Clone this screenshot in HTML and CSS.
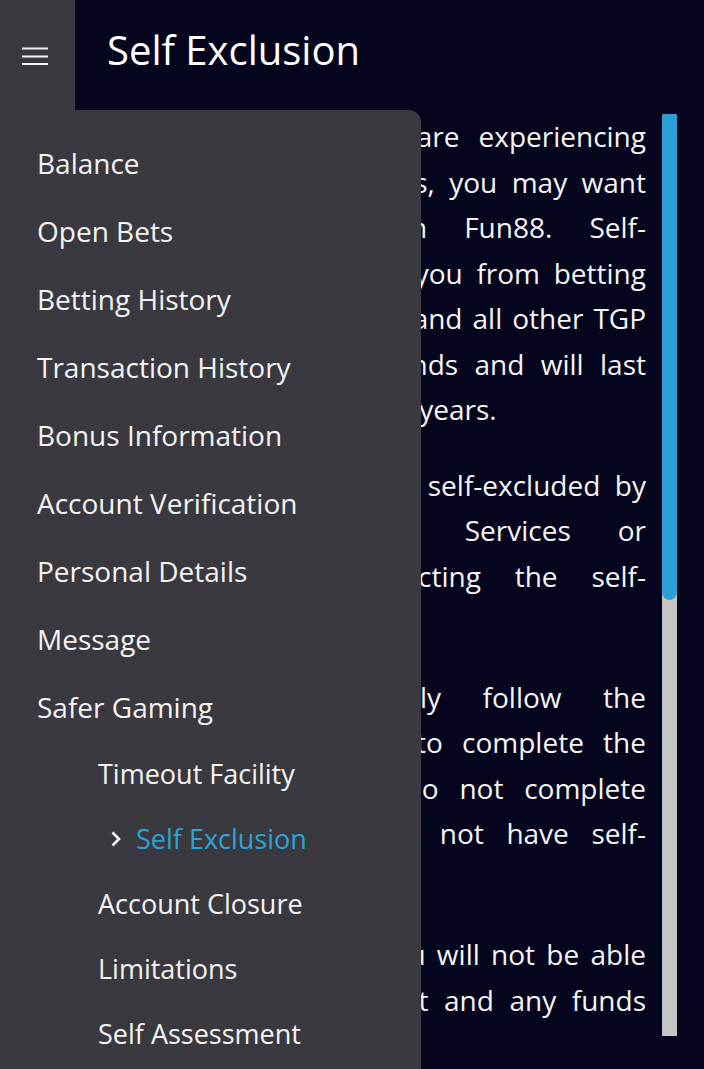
FILE: index.html
```html
<!doctype html>
<html lang="en">
  <head>
    <meta charset="UTF-8" />
    <meta name="viewport" content="width=device-width, initial-scale=1.0" />
    <title>Self Exclusion</title>
    <link rel="stylesheet" href="styles.css">
  </head>
  <body>
    <div class="page">
      <header class="topbar">
        <button class="menu-btn" aria-label="Menu">
          <svg width="26" height="18" viewBox="0 0 26 18">
            <path d="M0 1.5H26M0 9.5H26M0 17H26" stroke="#f2f2f2" stroke-width="2" />
          </svg>
        </button>
        <h1 class="title">Self Exclusion</h1>
      </header>

      <main class="main">
        <div class="content">
          <p>
            <span class="ln">If you feel that you are experiencing</span>
            <span class="ln">any gambling problems, you may want</span>
            <span class="ln">to self-exclude from Fun88. Self-</span>
            <span class="ln">exclusion will prevent you from betting</span>
            <span class="ln">on the website, Fun88 and all other TGP</span>
            <span class="ln">Europe registered brands and will last</span>
            <span class="ln end">for a minimum of three years.</span>
          </p>
          <p>
            <span class="ln">You may also become self-excluded by</span>
            <span class="ln">contacting Customer Services or</span>
            <span class="ln">alternatively by selecting the self-</span>
            <span class="ln end">exclusion option below.</span>
          </p>
          <p>
            <span class="ln">Please now carefully follow the</span>
            <span class="ln">instructions provided to complete the</span>
            <span class="ln">full process. If you do not complete</span>
            <span class="ln">the process, you will not have self-</span>
            <span class="ln end">excluded.</span>
          </p>
          <p>
            <span class="ln">Once self-excluded, you will not be able</span>
            <span class="ln">to access your account and any funds</span>
            <span class="ln end">remaining will be returned to you.</span>
          </p>
        </div>
        <div class="scrollbar"><div class="thumb"></div></div>
      </main>

      <nav class="drawer">
        <a class="item" href="#">Balance</a>
        <a class="item" href="#">Open Bets</a>
        <a class="item" href="#">Betting History</a>
        <a class="item" href="#">Transaction History</a>
        <a class="item" href="#">Bonus Information</a>
        <a class="item" href="#">Account Verification</a>
        <a class="item" href="#">Personal Details</a>
        <a class="item" href="#">Message</a>
        <a class="item" href="#">Safer Gaming</a>
        <a class="sub" href="#">Timeout Facility</a>
        <a class="sub active" href="#">
          <svg class="chev" width="10" height="16" viewBox="0 0 10 16">
            <path d="M1.5 1.5L8 8L1.5 14.5" fill="none" stroke="#fff" stroke-width="2.6" />
          </svg>
          Self Exclusion
        </a>
        <a class="sub" href="#">Account Closure</a>
        <a class="sub" href="#">Limitations</a>
        <a class="sub" href="#">Self Assessment</a>
      </nav>
    </div>
  </body>
</html>
```

FILE: styles.css
```css
body {
  margin: 0;
  background-color: #06051e;
  font-family: 'Open Sans', 'Noto Sans', sans-serif;
  color: #f4f4f4;
}
.page {
  position: relative;
  height: 100vh;
  display: flex;
  flex-direction: column;
  overflow: hidden;
}
.topbar {
  height: 110px;
  flex: none;
  display: flex;
}
.menu-btn {
  width: 75px;
  border: none;
  background: #3a393f;
  padding: 47px 0 0 22px;
  display: flex;
  align-items: flex-start;
}
.title {
  margin: 0 0 0 32px;
  padding-top: 22px;
  font-size: 40px;
  font-weight: 400;
  color: #fff;
  line-height: normal;
}
.main {
  flex: 1;
  min-height: 0;
  display: flex;
  gap: 16px;
  padding: 4px 27px 33px 107px;
}
.content {
  flex: 1;
  overflow: hidden;
  margin-bottom: 8px;
  font-size: 28px;
  line-height: 45.5px;
}
.content p {
  margin: 0 0 30px;
}
.content .ln {
  display: block;
  text-align: justify;
  text-align-last: justify;
  white-space: nowrap;
}
.content .ln.end {
  text-align-last: left;
}
.scrollbar {
  width: 15px;
  flex: none;
  background: #c5c5c5;
  border-radius: 2px 2px 0 0;
}
.thumb {
  height: 486px;
  background: #2b9fd6;
  border-radius: 3px 3px 8px 8px;
}
.drawer {
  position: absolute;
  top: 110px;
  left: 0;
  bottom: 0;
  width: 421px;
  padding-top: 19px;
  box-sizing: border-box;
  background: #3a393f;
  border-top-right-radius: 12px;
  display: flex;
  flex-direction: column;
}
.drawer a {
  color: #f4f4f4;
  text-decoration: none;
  display: flex;
  align-items: center;
  flex: none;
}
.drawer .item {
  height: 68px;
  padding-left: 37px;
  font-size: 28px;
}
.drawer .sub {
  height: 65px;
  padding-left: 98px;
  font-size: 27px;
}
.drawer .sub.active {
  color: #2ea3da;
}
.chev {
  margin: 0 15px 0 13px;
}
```
